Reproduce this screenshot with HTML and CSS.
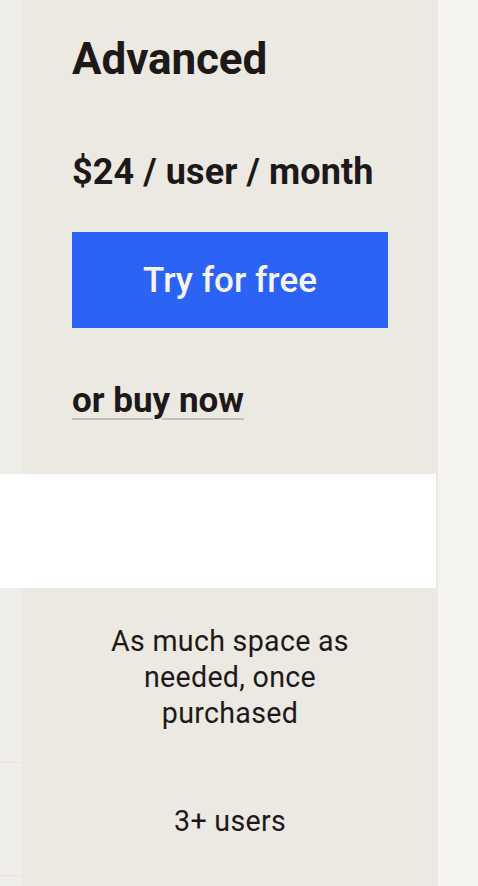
FILE: index.html
```html
<!DOCTYPE html>
<html lang="en">
<head>
<meta charset="utf-8">
<title>Advanced plan</title>
<link rel="stylesheet" href="styles.css">
</head>
<body>
<div class="table">
  <div class="cell prev head-prev"></div>
  <div class="cell adv head">
    <h2 class="plan-name">Advanced</h2>
    <p class="price">$24 / user / month</p>
    <a class="btn" href="#">Try for free</a>
    <a class="buy" href="#">or buy now</a>
  </div>
  <div class="cell next"></div>

  <div class="band-wrap"><div class="band"></div></div>
  <div class="cell next"></div>

  <div class="cell prev row-line"></div>
  <div class="cell adv feature feature-space">As much space as needed, once purchased</div>
  <div class="cell next"></div>

  <div class="cell prev row-line"></div>
  <div class="cell adv feature feature-users">3+ users</div>
  <div class="cell next"></div>

  <div class="cell prev"></div>
  <div class="cell adv tail"></div>
  <div class="cell next"></div>
</div>
</body>
</html>
```
FILE: styles.css
```css
html, body {
  margin: 0;
  padding: 0;
  background: #f5f4f1;
  height: 100%;
  overflow: hidden;
}

body {
  font-family: Roboto, "Liberation Sans", sans-serif;
  color: #1e1919;
}

.table {
  display: grid;
  grid-template-columns: 22px 416px 1fr;
}

.cell.prev {
  background: #f0eeea;
}

.cell.adv {
  background: #ece9e3;
}

.cell.next {
  background: #f5f4f1;
}

.head {
  padding: 33px 50px 51px;
  display: flex;
  flex-direction: column;
  align-items: flex-start;
}

.plan-name {
  margin: 0;
  font-size: 44px;
  line-height: 52px;
  font-weight: 700;
  letter-spacing: -0.1px;
}

.price {
  margin: 65px 0 0;
  font-size: 36px;
  line-height: 44px;
  font-weight: 700;
  letter-spacing: 0.1px;
}

.btn {
  margin-top: 38px;
  width: 316px;
  height: 96px;
  background: #2a63f6;
  color: #f7f5f2;
  display: flex;
  align-items: center;
  justify-content: center;
  font-size: 35px;
  font-weight: 500;
  text-decoration: none;
}

.buy {
  margin-top: 51px;
  font-size: 35px;
  line-height: 44px;
  font-weight: 700;
  color: #1e1919;
  text-decoration: underline;
  text-decoration-color: #c4beb4;
  text-decoration-thickness: 2px;
  text-underline-offset: 6px;
}

.band-wrap {
  grid-column: 1 / 3;
  background: #ece9e3;
  padding-right: 2px;
}

.band {
  background: #ffffff;
  height: 114px;
}

.row-line {
  border-bottom: 1px solid #e7e4de;
}

.feature {
  padding: 35px 60px 32px;
  display: flex;
  align-items: center;
  justify-content: center;
  text-align: center;
  font-size: 28.6px;
  line-height: 36px;
  letter-spacing: 0.3px;
}

.feature-users {
  padding-top: 40px;
  padding-bottom: 37px;
}

.tail {
  height: 200px;
}
```
